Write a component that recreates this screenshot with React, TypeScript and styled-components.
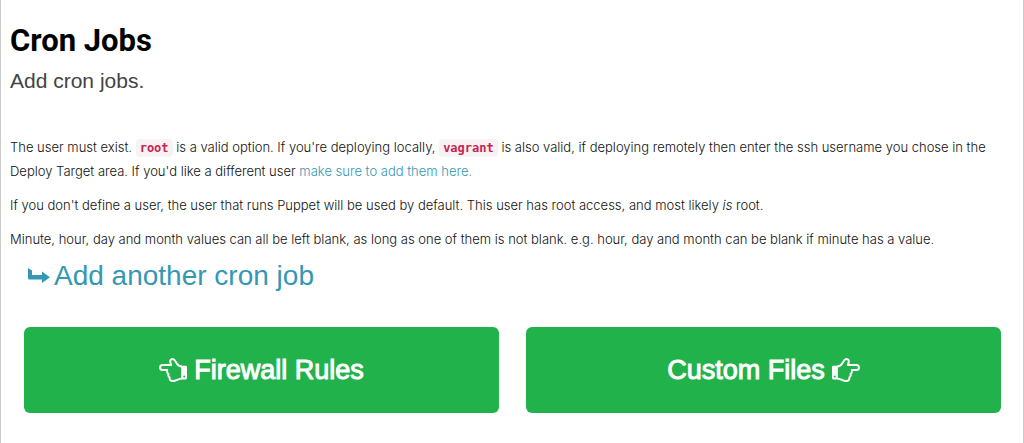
import React from 'react';
import styled, { createGlobalStyle } from 'styled-components';

const GlobalStyle = createGlobalStyle`
  *, *::before, *::after { box-sizing: border-box; }
  html, body { margin: 0; background: #fff; }
  body { font-family: "Liberation Sans", Arial, sans-serif; color: #111; }
`;

const Panel = styled.main`
  min-height: 100vh;
  border: solid #cbcbcb;
  border-width: 0 1px;
  padding: 17px 22px 30px 9px;
`;

const Title = styled.h1`
  margin: 0;
  font: 700 31px/48px Roboto, sans-serif;
  color: #000;
`;

const Lead = styled.p`
  margin: 0 0 38px;
  font-size: 21px;
  line-height: 32px;
  color: #444;
`;

const Help = styled.p`
  margin: 0 0 10px;
  font: 350 13px/24px Inter, sans-serif;
`;

const Code = styled.code`
  padding: 2px 4px;
  border-radius: 4px;
  background: #f9f2f4;
  color: #c7254e;
  font: 700 12px/14px "DejaVu Sans Mono", monospace;
`;

const Link = styled.a`
  color: #3498b5;
  text-decoration: none;
`;

const AddLink = styled(Link)`
  display: flex;
  align-items: center;
  gap: 4px;
  width: fit-content;
  margin: -5px 0 0 18px;
  font-size: 28px;
  line-height: 40px;
`;

const Steps = styled.nav`
  display: grid;
  grid-template-columns: 1fr 1fr;
  gap: 27px;
  margin: 31px 0 0 14px;
`;

const StepButton = styled.button`
  display: flex;
  align-items: center;
  justify-content: center;
  gap: 7px;
  min-height: 86px;
  border: 0;
  border-radius: 6px;
  background: #22b24c;
  color: #fff;
  font: 400 27px/38px "Liberation Sans", Arial, sans-serif;
  -webkit-text-stroke: 1px currentColor;
  cursor: pointer;
`;

const HandIcon = styled.svg<{ $flip?: boolean }>`
  flex: none;
  transform: ${p => (p.$flip ? 'scaleX(-1)' : 'none')};
`;

const Hand = ({ left }: { left?: boolean }) => (
  <HandIcon $flip={left} width="28" height="24" viewBox="0 0 28 24" aria-hidden="true">
    <path
      d="M5 8.6C8 8.4 9 7.6 10.2 5.6C11.4 3.6 12.2 1.2 14.3 1C16.4.9 17.2 2.8 16.6 4.6L15.8 7H24.4C27.8 7 27.8 12 24.4 12H19.8C20.2 13.6 19.8 15 18.6 16C19 17.6 18.6 18.6 17.4 19.6C17.6 22 16.2 23 14 23C10.6 23 9 20.8 5 20.6"
      fill="none"
      stroke="currentColor"
      strokeWidth="2"
      strokeLinejoin="round"
    />
    <path
      fillRule="evenodd"
      fill="currentColor"
      d="M1.4 7.7H5.9V21.5H1.4C.6 21.5 0 20.9 0 20.1V9.1C0 8.3.6 7.7 1.4 7.7ZM2.8 17.6A1 1 0 1 0 2.8 19.6A1 1 0 1 0 2.8 17.6Z"
    />
  </HandIcon>
);

const TurnArrow = () => (
  <svg width="22" height="16" viewBox="0 0 22 16" aria-hidden="true">
    <path d="M0 0L4 2.6V7H14V3.6L22 9.3L14 15V11.4H1.2Q0 11.4 0 10.2Z" fill="currentColor" />
  </svg>
);

export default function App() {
  return (
    <>
      <GlobalStyle />
      <Panel>
        <header>
          <Title>Cron Jobs</Title>
          <Lead>Add cron jobs.</Lead>
        </header>
        <Help>
          The user must exist. <Code>root</Code> is a valid option. If you're deploying locally,{' '}
          <Code>vagrant</Code> is also valid, if deploying remotely then enter the ssh username you
          chose in the Deploy Target area. If you'd like a different user{' '}
          <Link href="#users">make sure to add them here.</Link>
        </Help>
        <Help>
          If you don't define a user, the user that runs Puppet will be used by default. This user
          has root access, and most likely <em>is</em> root.
        </Help>
        <Help>
          Minute, hour, day and month values can all be left blank, as long as one of them is not
          blank. e.g. hour, day and month can be blank if minute has a value.
        </Help>
        <AddLink href="#add-cron-job">
          <TurnArrow />
          Add another cron job
        </AddLink>
        <Steps aria-label="Sections">
          <StepButton type="button">
            <Hand left />
            Firewall Rules
          </StepButton>
          <StepButton type="button">
            Custom Files
            <Hand />
          </StepButton>
        </Steps>
      </Panel>
    </>
  );
}
